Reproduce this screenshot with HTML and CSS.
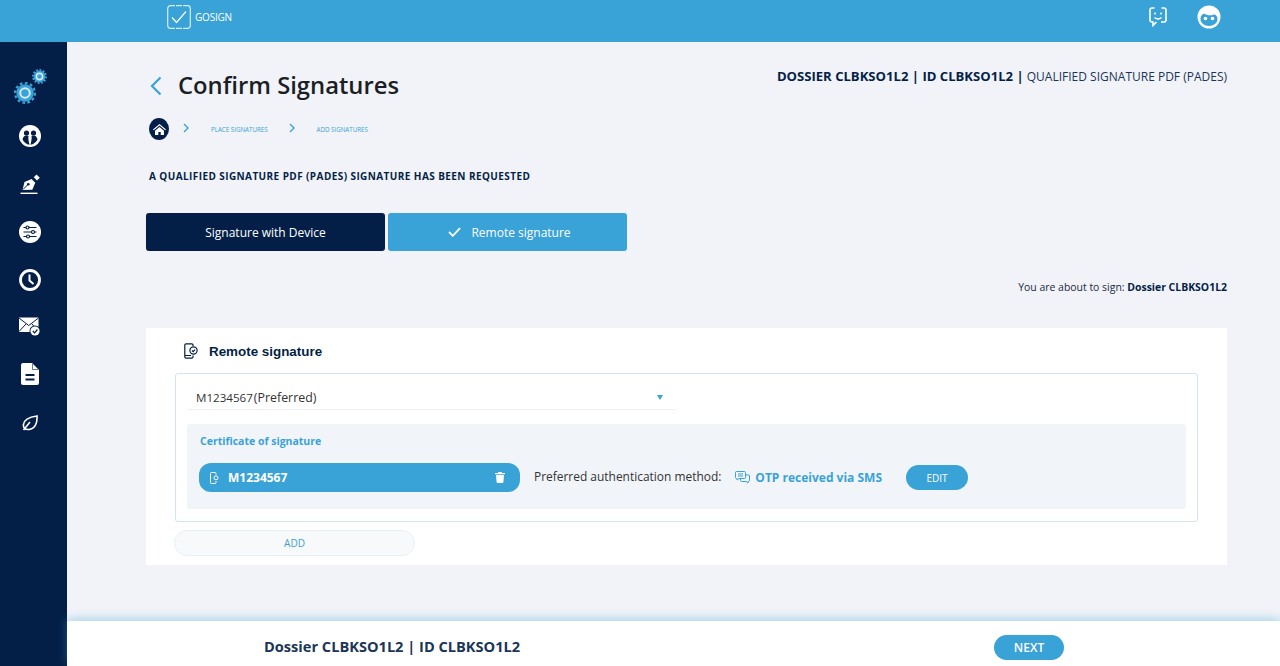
FILE: index.html
```html
<!DOCTYPE html>
<html>
  <head>
    <meta charset="UTF-8" />
    <meta name="viewport" content="width=device-width, initial-scale=1" />
    <title>GoSign</title>
    <link rel="stylesheet" href="styles.css">
  </head>
  <body>
    <header class="topbar">
      <div class="logo">
        <svg width="24" height="24" viewBox="0 0 24 24" fill="none" stroke="#fff" stroke-width="1.2">
          <path d="M8 .7H3.500A2.800 2.800 0 0 0 .7 3.500v17a2.800 2.800 0 0 0 2.800 2.800H8M16 .7h4.500a2.800 2.800 0 0 1 2.800 2.800v17a2.800 2.800 0 0 1-2.800 2.800H16M9 23.300h6M9 .7h6" stroke-opacity=".8"/>
          <path d="M5 12.500l4.500 5L19 6.500"/>
        </svg>
        <span>GOSIGN</span>
      </div>
      <div class="top-icons">
        <svg width="18" height="20" viewBox="0 0 18 20" fill="none" stroke="#fff" stroke-width="1.6">
          <path d="M5.500 1H3a2 2 0 0 0-2 2v10a2 2 0 0 0 2 2h1v3.500L7.500 15M12.500 1H15a2 2 0 0 1 2 2v10a2 2 0 0 1-2 2h-3"/>
          <circle cx="6" cy="6.500" r="1" fill="#fff" stroke="none"/>
          <circle cx="12" cy="6.500" r="1" fill="#fff" stroke="none"/>
          <path d="M5.500 10.500c2 1.600 5 1.600 7 0"/>
        </svg>
        <svg width="24" height="24" viewBox="0 0 24 24">
          <circle cx="12" cy="12" r="11.500" fill="#fff"/>
          <path d="M3.500 14c0-2.500 1-4.500 3.500-5.500 2.500 2 8 2.500 10.500.8 2 1 3 2.700 3 4.700 0 4-4 7-8.500 7S3.500 18 3.500 14z" fill="#39a2d7"/>
          <circle cx="8.500" cy="13.500" r="1.800" fill="#fff"/>
          <circle cx="15.500" cy="13.500" r="1.800" fill="#fff"/>
        </svg>
      </div>
    </header>

    <div class="layout">
      <nav class="sidebar">
        <div class="gears">
          <svg class="gear-small" width="15" height="15" viewBox="0 0 24 24">
            <circle cx="12" cy="12" r="9.500" fill="#39a2d7"/>
            <circle cx="12" cy="12" r="10.600" fill="none" stroke="#39a2d7" stroke-width="2.800" stroke-dasharray="3 2.500"/>
            <circle cx="12" cy="12" r="5" fill="none" stroke="#d5e9f6" stroke-width="2.500"/>
          </svg>
          <svg class="gear-big" width="22" height="22" viewBox="0 0 24 24">
            <circle cx="12" cy="12" r="9.500" fill="#39a2d7"/>
            <circle cx="12" cy="12" r="10.800" fill="none" stroke="#39a2d7" stroke-width="2.400" stroke-dasharray="3 2.600"/>
            <circle cx="12" cy="12" r="5.200" fill="none" stroke="#d5e9f6" stroke-width="2.200"/>
          </svg>
        </div>
        <svg class="nav-icon" width="22" height="22" viewBox="0 0 22 22">
          <circle cx="11" cy="11" r="11" fill="#fff"/>
          <circle cx="7.500" cy="8" r="2.600" fill="#041f47"/>
          <circle cx="14.500" cy="8" r="2.600" fill="#041f47"/>
          <path d="M3.500 14.500c.5-2.500 2-4 4-4 .8 0 1.500.2 2 .6-.5 2 .1 5 1 8.700-3-.4-5.500-2.600-7-5.300zM18.500 14.500c-.5-2.500-2-4-4-4-.8 0-1.500.2-2 .6.500 2-.1 5-1 8.700 3-.4 5.500-2.600 7-5.300z" fill="#041f47"/>
        </svg>
        <svg class="nav-icon" width="22" height="22" viewBox="0 0 22 22">
          <path d="M3.500 17l2-8 7-3 3.800 3.800-3 7z" fill="#fff"/>
          <path d="M4 16.500l4.500-4.500" stroke="#041f47" stroke-width="1"/>
          <circle cx="9.300" cy="11.200" r="1.300" fill="#041f47"/>
          <path d="M17.500 1.500l3.300 3.300-2.800 2.700-3.200-3.200z" fill="#fff"/>
          <path d="M1.500 20.300h17" stroke="#fff" stroke-width="1.400"/>
        </svg>
        <svg class="nav-icon" width="22" height="22" viewBox="0 0 22 22">
          <circle cx="11" cy="11" r="11" fill="#fff"/>
          <g stroke="#041f47" stroke-width="1.200" fill="#fff">
            <path d="M4.500 6.500h13M4.500 11h13M4.500 15.500h13"/>
            <circle cx="8.500" cy="6.500" r="1.500"/>
            <circle cx="14" cy="11" r="1.500"/>
            <circle cx="9" cy="15.500" r="1.500"/>
          </g>
        </svg>
        <svg class="nav-icon" width="22" height="22" viewBox="0 0 22 22" fill="none" stroke="#fff">
          <circle cx="11" cy="11" r="9.500" stroke-width="2.800"/>
          <path d="M10.500 5.500v6l4 3.500" stroke-width="2"/>
        </svg>
        <svg class="nav-icon" width="22" height="20" viewBox="0 0 22 20">
          <path d="M0 .5h19.500V15H0z" fill="#fff"/>
          <path d="M0 1l9.750 7.500L19.500 1M0 14.500l7-7.500M19.500 14.500L13 7" fill="none" stroke="#041f47" stroke-width="1"/>
          <circle cx="16" cy="14" r="5.500" fill="#041f47"/>
          <circle cx="16" cy="14" r="4.600" fill="#fff"/>
          <path d="M13.800 14l1.800 1.800 2.800-3.300" fill="none" stroke="#041f47" stroke-width="1.200"/>
        </svg>
        <svg class="nav-icon" width="18" height="22" viewBox="0 0 18 22">
          <path d="M2 0h9l7 7v13a2 2 0 0 1-2 2H2a2 2 0 0 1-2-2V2a2 2 0 0 1 2-2z" fill="#fff"/>
          <path d="M4.500 12h9M4.500 16.500h9" stroke="#041f47" stroke-width="1.800"/>
          <path d="M11.500 1v5.500H17" fill="none" stroke="#041f47" stroke-width=".6"/>
        </svg>
        <svg class="nav-icon nav-leaf" width="16" height="16" viewBox="0 0 16 16" fill="none" stroke="#fff" stroke-width="1.600">
          <path d="M15 1c.5 7-2 13-8 13.500C3 15 1 12.500 1.500 9.500 2 5 7 2 15 1zM1.500 15L8 7"/>
        </svg>
      </nav>

      <main class="content">
        <div class="head-row">
          <div class="title-wrap">
            <svg width="14" height="20" viewBox="0 0 14 20" fill="none" stroke="#39a2d7" stroke-width="2.200">
              <path d="M11.500 1.500L3 10l8.500 8.500"/>
            </svg>
            <h1>Confirm Signatures</h1>
          </div>
          <div class="dossier-info">
            <b>DOSSIER CLBKSO1L2 | ID CLBKSO1L2 |</b> QUALIFIED SIGNATURE PDF (PADES)
          </div>
        </div>

        <div class="crumbs">
          <span class="home">
            <svg width="13" height="11" viewBox="0 0 13 11" fill="#fff"><path d="M6.500 0L0 5.500l.8.8 5.700-4.700 5.700 4.700.8-.8zM2 6.800V11h3.300V8h2.400v3H11V6.800L6.500 3z"/></svg>
          </span>
          <svg class="chev" width="7" height="10" viewBox="0 0 7 10" fill="none" stroke="#39a2d7" stroke-width="1.400"><path d="M1 1l4 4-4 4"/></svg>
          <span class="crumb-text">PLACE SIGNATURES</span>
          <svg class="chev" width="7" height="10" viewBox="0 0 7 10" fill="none" stroke="#39a2d7" stroke-width="1.400"><path d="M1 1l4 4-4 4"/></svg>
          <span class="crumb-text">ADD SIGNATURES</span>
        </div>

        <p class="request-note">A QUALIFIED SIGNATURE PDF (PADES) SIGNATURE HAS BEEN REQUESTED</p>

        <div class="tabs">
          <button class="tab tab-dark">Signature with Device</button>
          <button class="tab tab-blue">
            <svg width="13" height="10" viewBox="0 0 13 10" fill="none" stroke="#fff" stroke-width="1.800"><path d="M1 5l3.800 3.800L12 1.200"/></svg>
            Remote signature
          </button>
        </div>

        <p class="about">You are about to sign: <b>Dossier CLBKSO1L2</b></p>

        <section class="card">
          <div class="card-title">
            <svg width="14" height="16" viewBox="0 0 14 16" fill="none" stroke="#041f47" stroke-width="1.200">
              <path d="M9 3V2a1.200 1.200 0 0 0-1.200-1.200H2A1.200 1.200 0 0 0 .8 2v12A1.200 1.200 0 0 0 2 15.200h5.800A1.200 1.200 0 0 0 9 14v-1.500M.8 12.500H7"/>
              <circle cx="9.500" cy="7.500" r="3.600"/>
              <path d="M8 7.500l1.200 1.200 1.800-2"/>
            </svg>
            <h2>Remote signature</h2>
          </div>

          <div class="cert-box">
            <div class="select-row">
              <span class="select-value"><span class="select-code">M1234567</span>(Preferred)</span>
              <span class="select-arrow"></span>
            </div>
            <div class="cert-panel">
              <div class="cert-label">Certificate of signature</div>
              <div class="cert-row">
                <div class="cert-pill">
                  <svg width="9" height="12" viewBox="0 0 9 12" fill="none" stroke="#fff" stroke-width="1"><path d="M6 2.500V1.500a1 1 0 0 0-1-1H1.500a1 1 0 0 0-1 1v9a1 1 0 0 0 1 1H5a1 1 0 0 0 1-1V9"/><circle cx="6" cy="5.800" r="2"/></svg>
                  <span class="cert-code">M1234567</span>
                  <svg class="trash" width="10" height="11" viewBox="0 0 10 11" fill="#fff"><path d="M3.500 0h3l.5 1h3v1.200H0V1h3zM1 3h8l-.6 7a1 1 0 0 1-1 1H2.600a1 1 0 0 1-1-1z"/></svg>
                </div>
                <span class="auth-label">Preferred authentication method:</span>
                <span class="auth-method">
                  <svg width="15" height="13" viewBox="0 0 15 13" fill="none" stroke="#39a2d7" stroke-width="1"><path d="M.5 1.500a1 1 0 0 1 1-1h8a1 1 0 0 1 1 1v5a1 1 0 0 1-1 1H4L2 9V7.500h-.5a1 1 0 0 1-1-1zM3 3h5M3 5h5M11 4h2.500a1 1 0 0 1 1 1v4.500a1 1 0 0 1-1 1H13V12l-2-1.500H6.500a1 1 0 0 1-1-1V8"/></svg>
                  OTP received via SMS
                </span>
                <button class="edit-btn">EDIT</button>
              </div>
            </div>
          </div>
          <button class="add-btn">ADD</button>
        </section>

        <footer class="bottombar">
          <span class="bottom-title">Dossier CLBKSO1L2 | ID CLBKSO1L2</span>
          <button class="next-btn">NEXT</button>
        </footer>
      </main>
    </div>
  </body>
</html>
```

FILE: styles.css
```css
html, body {
  height: 100%;
}

body {
  margin: 0;
  overflow: hidden;
  display: flex;
  flex-direction: column;
  background-color: #f1f3f8;
  font-family: "Open Sans", sans-serif;
  color: #041f47;
}

button {
  font-family: "Open Sans", sans-serif;
  border: none;
}

.topbar {
  height: 42px;
  flex-shrink: 0;
  display: flex;
  justify-content: space-between;
  align-items: center;
  background-color: #39a2d7;
  padding: 0 59px 8px 167px;
  box-sizing: border-box;
}

.logo {
  display: flex;
  align-items: center;
  gap: 4px;
  color: #fff;
  font-size: 10px;
  letter-spacing: -0.2px;
}

.top-icons {
  display: flex;
  align-items: center;
  gap: 30px;
}

.layout {
  flex: 1;
  display: flex;
  min-height: 0;
}

.sidebar {
  width: 67px;
  flex-shrink: 0;
  box-sizing: border-box;
  padding-right: 7px;
  display: flex;
  flex-direction: column;
  align-items: center;
  background-color: #041f47;
}

.gears {
  position: relative;
  width: 36px;
  height: 39px;
  margin-top: 26px;
  margin-bottom: 18px;
  align-self: flex-start;
  margin-left: 13px;
}

.gear-small {
  position: absolute;
  left: 19px;
  top: 1px;
}

.gear-big {
  position: absolute;
  left: 1px;
  top: 14px;
}

.nav-icon {
  margin-bottom: 26px;
  flex-shrink: 0;
}

.nav-leaf {
  margin-top: 4px;
}

.content {
  flex: 1;
  display: flex;
  flex-direction: column;
  padding: 0 53px 0 79px;
  min-width: 0;
}

.head-row {
  display: flex;
  justify-content: space-between;
  padding-top: 25px;
}

.title-wrap {
  display: flex;
  align-items: center;
  gap: 15px;
  padding-left: 3px;
}

h1 {
  margin: 0;
  font-size: 23.800px;
  line-height: 37px;
  font-weight: 600;
  color: #1c1e26;
}

.dossier-info {
  font-size: 12px;
  line-height: 18px;
  color: #1b3558;
}

.dossier-info b {
  color: #041f47;
  font-size: 13.100px;
}

.crumbs {
  display: flex;
  align-items: center;
  margin-top: 14px;
  padding-left: 3px;
  height: 22px;
}

.home {
  width: 20px;
  height: 22px;
  border-radius: 50%;
  background-color: #041f47;
  display: flex;
  align-items: center;
  justify-content: center;
}

.chev {
  margin: -3px 0 0 14px;
}

.chev + .crumb-text {
  margin-left: 21px;
  font-size: 6.200px;
  color: #39a2d7;
}

.crumb-text + .chev {
  margin-left: 21px;
}

.request-note {
  margin: 29px 0 0 3px;
  font-size: 10px;
  line-height: 14px;
  font-weight: 700;
  letter-spacing: 0.415px;
  color: #041f47;
}

.tabs {
  display: flex;
  gap: 3px;
  margin-top: 30px;
}

.tab {
  width: 239px;
  height: 38px;
  border-radius: 3px;
  color: #fff;
  font-size: 12px;
  display: flex;
  align-items: center;
  justify-content: center;
  gap: 10px;
}

.tab-dark {
  background-color: #041f47;
}

.tab-blue {
  background-color: #39a2d7;
  padding-left: 10px;
}

.about {
  margin: 29px 0 0;
  font-size: 10.450px;
  line-height: 15px;
  text-align: right;
  color: #1c2a3e;
}

.about b {
  color: #041f47;
}

.card {
  margin-top: 33px;
  height: 237px;
  box-sizing: border-box;
  background-color: #fff;
  padding: 13px 29px 0 29px;
}

.card-title {
  display: flex;
  align-items: center;
  gap: 11px;
  height: 20px;
  padding-left: 9px;
}

h2 {
  margin: 0;
  font-family: "Liberation Sans", sans-serif;
  font-size: 13.400px;
  font-weight: 700;
  color: #041f47;
}

.cert-box {
  margin-top: 12px;
  height: 149px;
  box-sizing: border-box;
  border: 1px solid #d3e5ef;
  border-radius: 3px;
  padding: 0 11px;
}

.select-row {
  width: 489px;
  height: 36px;
  box-sizing: border-box;
  border-bottom: 1px solid #eef0f3;
  display: flex;
  justify-content: space-between;
  align-items: center;
  padding: 11px 13px 0 9px;
}

.select-value {
  font-size: 12.400px;
  color: #333;
}

.select-code {
  font-size: 11.600px;
  margin-right: 1px;
}

.select-arrow {
  width: 0;
  height: 0;
  border-left: 3px solid transparent;
  border-right: 3px solid transparent;
  border-top: 5px solid #39a2d7;
}

.cert-panel {
  margin-top: 14px;
  height: 85px;
  box-sizing: border-box;
  background-color: #f1f5f9;
  border-radius: 3px;
  padding: 10px 12px 10px 13px;
}

.cert-label {
  font-size: 10.500px;
  line-height: 14px;
  font-weight: 700;
  color: #39a2d7;
}

.cert-row {
  display: flex;
  align-items: center;
  margin: 15px 0 0 -1px;
}

.cert-pill {
  width: 321px;
  height: 29px;
  box-sizing: border-box;
  border-radius: 12px;
  background-color: #39a2d7;
  color: #fff;
  display: flex;
  align-items: center;
  padding: 0 15px 0 11px;
}

.cert-code {
  flex: 1;
  margin-left: 9px;
  font-size: 12px;
  font-weight: 700;
}

.auth-label {
  margin-left: 14px;
  font-size: 11.950px;
  color: #333;
  position: relative;
  top: -1px;
}

.auth-method {
  margin-left: 14px;
  display: flex;
  align-items: center;
  gap: 5px;
  font-size: 12px;
  font-weight: 700;
  color: #39a2d7;
}

.edit-btn {
  margin-left: 24px;
  width: 62px;
  height: 25px;
  border-radius: 13px;
  background-color: #39a2d7;
  color: #fff;
  font-size: 10px;
}

.add-btn {
  display: block;
  margin: 8px 0 0 -1px;
  width: 241px;
  height: 26px;
  box-sizing: border-box;
  border: 1px solid #e6f1f7;
  border-radius: 13px;
  background-color: #f7f9fb;
  color: #39a2d7;
  font-size: 10px;
}

.bottombar {
  margin: auto -53px 0 -79px;
  height: 45px;
  flex-shrink: 0;
  box-sizing: border-box;
  background-color: #fff;
  box-shadow: 0 -2px 9px rgba(57, 162, 215, 0.4);
  display: flex;
  align-items: center;
  justify-content: space-between;
  padding: 10px 216px 3px 197px;
}

.bottom-title {
  margin-bottom: 2px;
  font-size: 14.600px;
  font-weight: 700;
  color: #1b3558;
}

.next-btn {
  width: 70px;
  height: 25px;
  border-radius: 13px;
  background-color: #39a2d7;
  color: #fff;
  font-size: 12px;
  font-weight: 600;
}
```
